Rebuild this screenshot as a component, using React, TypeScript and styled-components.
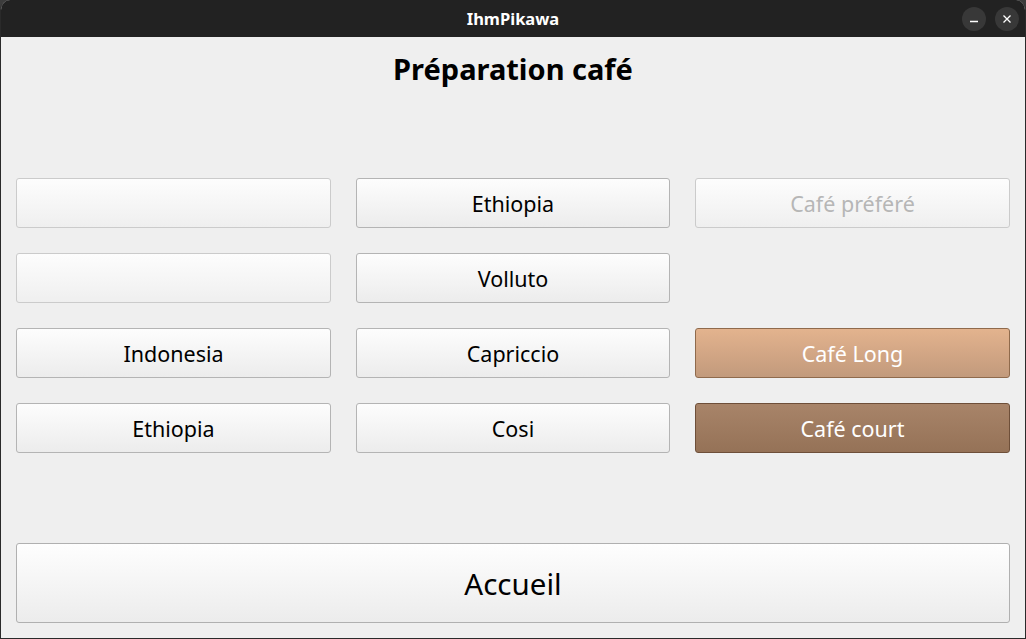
import React from 'react';
import styled, { createGlobalStyle, css } from 'styled-components';

const GlobalStyle = createGlobalStyle`
  html, body {
    margin: 0;
    padding: 0;
    background: #3c3c3c;
  }
  body {
    font-family: 'Noto Sans', 'Open Sans', sans-serif;
  }
`;

const Window = styled.div`
  width: 1026px;
  height: 639px;
  box-sizing: border-box;
  display: flex;
  flex-direction: column;
  background: #efefef;
  border: 1px solid #2a2a2a;
  border-top: none;
  border-radius: 10px 10px 0 0;
  overflow: hidden;
`;

const TitleBar = styled.div`
  position: relative;
  height: 37px;
  flex-shrink: 0;
  display: flex;
  align-items: center;
  justify-content: center;
  background: #222222;
  color: #ffffff;
  font-size: 16.5px;
  font-weight: bold;
`;

const Controls = styled.div`
  position: absolute;
  right: 6px;
  top: 7px;
  display: flex;
  gap: 9px;
`;

const ControlButton = styled.div`
  width: 24px;
  height: 24px;
  border-radius: 50%;
  background: #383838;
  display: flex;
  align-items: center;
  justify-content: center;
`;

const Content = styled.div`
  flex: 1;
  display: flex;
  flex-direction: column;
  padding: 0 15px 15px 15px;
`;

const Heading = styled.h1`
  margin: 12px 0 0 0;
  height: 40px;
  text-align: center;
  font-size: 29px;
  font-weight: bold;
  color: #000;
  line-height: 40px;
`;

const Grid = styled.div`
  margin-top: 89px;
  display: grid;
  grid-template-columns: 315px 314px 315px;
  grid-auto-rows: 50px;
  column-gap: 25px;
  row-gap: 25px;
`;

type Variant = 'normal' | 'disabled' | 'long' | 'court';

const variants = {
  normal: css`
    color: #000;
    border-color: #b4b4b4;
    background: linear-gradient(#fdfdfd, #ececec);
  `,
  disabled: css`
    color: #b6b6b6;
    border-color: #cbcbcb;
    background: linear-gradient(#fdfdfd, #efefef);
  `,
  long: css`
    color: #ffffff;
    border-color: #8f6a4c;
    background: linear-gradient(#e3b38e, #c29a7c);
  `,
  court: css`
    color: #ffffff;
    border-color: #6e4f39;
    background: linear-gradient(#a88469, #957257);
  `,
};

const CoffeeButton = styled.button<{ $variant: Variant }>`
  box-sizing: border-box;
  height: 50px;
  border: 1px solid;
  border-radius: 3px;
  font-family: 'Noto Sans', sans-serif;
  font-size: 21.5px;
  padding: 0;
  ${(p) => variants[p.$variant]}
`;

const Spacer = styled.div``;

const HomeButton = styled.button`
  margin-top: auto;
  box-sizing: border-box;
  height: 80px;
  width: 100%;
  border: 1px solid #b0b0b0;
  border-radius: 3px;
  font-family: 'Noto Sans', sans-serif;
  font-size: 29.5px;
  color: #000;
  background: linear-gradient(#fefefe, #ececec);
`;

const cells: ({ label: string; variant: Variant } | null)[] = [
  { label: '', variant: 'disabled' },
  { label: 'Ethiopia', variant: 'normal' },
  { label: 'Café préféré', variant: 'disabled' },
  { label: '', variant: 'disabled' },
  { label: 'Volluto', variant: 'normal' },
  null,
  { label: 'Indonesia', variant: 'normal' },
  { label: 'Capriccio', variant: 'normal' },
  { label: 'Café Long', variant: 'long' },
  { label: 'Ethiopia', variant: 'normal' },
  { label: 'Cosi', variant: 'normal' },
  { label: 'Café court', variant: 'court' },
];

export default function App() {
  return (
    <>
      <GlobalStyle />
      <Window>
        <TitleBar>
          IhmPikawa
          <Controls>
            <ControlButton>
              <svg width="10" height="10" viewBox="0 0 10 10">
                <line x1="1" y1="7.5" x2="9" y2="7.5" stroke="#fff" strokeWidth="1.3" />
              </svg>
            </ControlButton>
            <ControlButton>
              <svg width="10" height="10" viewBox="0 0 10 10">
                <path d="M1.5 1.5 L8.5 8.5 M8.5 1.5 L1.5 8.5" stroke="#fff" strokeWidth="1.3" />
              </svg>
            </ControlButton>
          </Controls>
        </TitleBar>
        <Content>
          <Heading>Préparation café</Heading>
          <Grid>
            {cells.map((c, i) =>
              c ? (
                <CoffeeButton key={i} $variant={c.variant}>
                  {c.label}
                </CoffeeButton>
              ) : (
                <Spacer key={i} />
              )
            )}
          </Grid>
          <HomeButton>Accueil</HomeButton>
        </Content>
      </Window>
    </>
  );
}
